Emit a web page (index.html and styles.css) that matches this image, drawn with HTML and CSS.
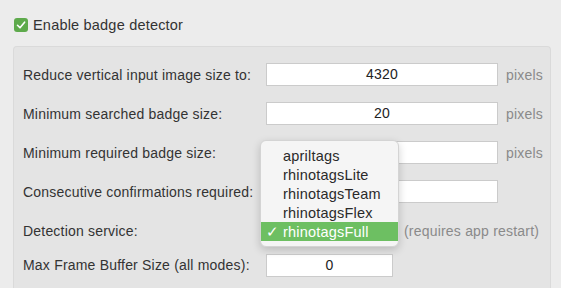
FILE: index.html
```html
<!DOCTYPE html>
<html lang="en">
<head>
    <meta charset="UTF-8">
    <meta name="viewport" content="width=device-width, initial-scale=1.0">
    <title>Badge detector settings</title>
    <link rel="stylesheet" href="styles.css">
</head>
<body>
    <!-- enable switch -->
    <label class="enable">
        <span class="checkbox">
            <svg width="14" height="14" viewBox="0 0 14 14"><path d="M3.5 7.3 L6 9.8 L10.6 4.2" fill="none" stroke="#fff" stroke-width="1.6" stroke-linecap="round" stroke-linejoin="round"/></svg>
        </span>
        Enable badge detector
    </label>

    <!-- settings group -->
    <div class="group">
        <div class="row">
            <span class="label">Reduce vertical input image size to:</span>
            <div class="field">4320</div>
            <span class="unit">pixels</span>
        </div>
        <div class="row">
            <span class="label">Minimum searched badge size:</span>
            <div class="field">20</div>
            <span class="unit">pixels</span>
        </div>
        <div class="row">
            <span class="label">Minimum required badge size:</span>
            <div class="field"></div>
            <span class="unit">pixels</span>
        </div>
        <div class="row">
            <span class="label">Consecutive confirmations required:</span>
            <div class="field"></div>
        </div>
        <div class="row">
            <span class="label">Detection service:</span>
            <div class="select-slot"></div>
            <span class="unit">(requires app restart)</span>
        </div>
        <div class="row last">
            <span class="label">Max Frame Buffer Size (all modes):</span>
            <div class="field short">0</div>
        </div>

        <!-- open dropdown menu -->
        <ul class="menu">
            <li>apriltags</li>
            <li>rhinotagsLite</li>
            <li>rhinotagsTeam</li>
            <li>rhinotagsFlex</li>
            <li class="selected"><span class="tick">✓</span>rhinotagsFull</li>
        </ul>
    </div>
</body>
</html>
```

FILE: styles.css
```css
/* page */
body {
    margin: 0;
    background-color: #ececec;
    font-family: "Liberation Sans", Arial, sans-serif;
    font-size: 14px;
    letter-spacing: 0.2px;
    color: #333;
}

/* enable checkbox */
.enable {
    display: flex;
    align-items: center;
    gap: 5px;
    padding: 17px 0 0 14px;
    height: 15px;
    font-size: 14.5px;
}

.checkbox {
    width: 14px;
    height: 14px;
    border-radius: 3px;
    background-color: #5eaa4c;
    display: flex;
}

/* group box */
.group {
    position: relative;
    margin: 14px 0 0 13px;
    width: 536px;
    padding: 8px 0 0 0;
    background-color: #e4e4e4;
    border: 1px solid #dadada;
    border-bottom: none;
    border-radius: 4px 4px 0 0;
    height: 240px;
}

.row {
    display: flex;
    align-items: center;
    height: 39px;
}

.row.last {
    height: 30px;
}

.label {
    width: 243px;
    padding-left: 9px;
    flex-shrink: 0;
    white-space: nowrap;
}

.field {
    width: 230px;
    height: 21px;
    background-color: #fff;
    border: 1px solid #cbcbcb;
    text-align: center;
    line-height: 21px;
    color: #222;
}

.field.short {
    width: 125px;
}

.select-slot {
    width: 130px;
}

.unit {
    margin-left: 8px;
    color: #8a8a8a;
    white-space: nowrap;
}

/* dropdown */
.menu {
    position: absolute;
    left: 246px;
    top: 93px;
    width: 137px;
    margin: 0;
    padding: 5px 0;
    list-style: none;
    background-color: #f5f5f5;
    border: 1px solid #d4d4d4;
    border-radius: 6px;
    box-shadow: 0 3px 8px rgba(0, 0, 0, 0.18);
    overflow: hidden;
}

.menu li {
    height: 19px;
    line-height: 20px;
    padding-left: 22px;
    position: relative;
    font-size: 14.5px;
    color: #2a2a2a;
}

.menu li.selected {
    background-color: #6dbf62;
    color: #fff;
}

.tick {
    position: absolute;
    left: 5px;
}
```
